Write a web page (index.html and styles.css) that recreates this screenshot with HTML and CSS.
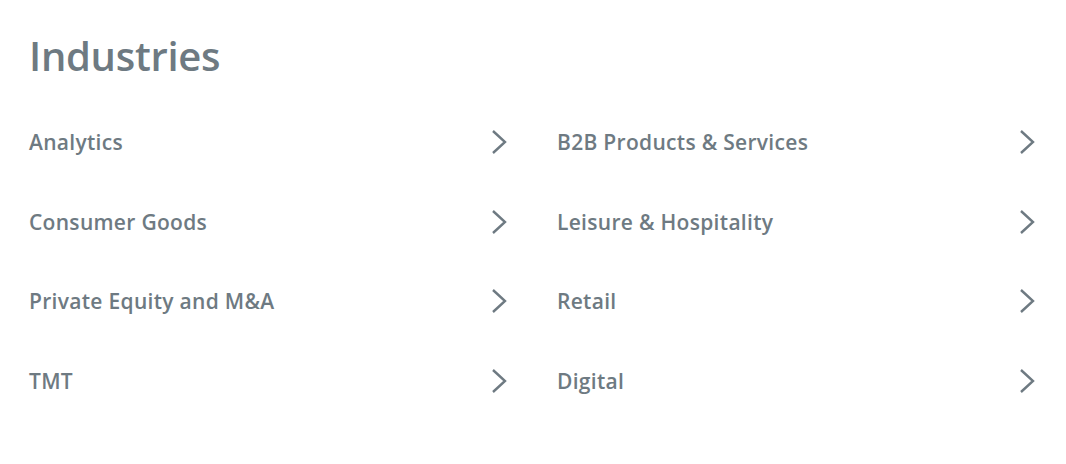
FILE: index.html
```html
<!DOCTYPE html>
<html lang="en">
<head>
  <meta charset="UTF-8">
  <meta name="viewport" content="width=device-width, initial-scale=1.0">
  <title>Industries</title>
  <link rel="stylesheet" href="styles.css">
</head>
<body>
  <section class="industries">
    <h1>Industries</h1>
    <ul class="list">
      <li><a href="#"><span>Analytics</span><svg class="chev" viewBox="0 0 16 26"><polyline points="2,2 14,13 2,24"/></svg></a></li>
      <li><a href="#"><span>B2B Products &amp; Services</span><svg class="chev" viewBox="0 0 16 26"><polyline points="2,2 14,13 2,24"/></svg></a></li>
      <li><a href="#"><span>Consumer Goods</span><svg class="chev" viewBox="0 0 16 26"><polyline points="2,2 14,13 2,24"/></svg></a></li>
      <li><a href="#"><span>Leisure &amp; Hospitality</span><svg class="chev" viewBox="0 0 16 26"><polyline points="2,2 14,13 2,24"/></svg></a></li>
      <li><a href="#"><span>Private Equity and M&amp;A</span><svg class="chev" viewBox="0 0 16 26"><polyline points="2,2 14,13 2,24"/></svg></a></li>
      <li><a href="#"><span>Retail</span><svg class="chev" viewBox="0 0 16 26"><polyline points="2,2 14,13 2,24"/></svg></a></li>
      <li><a href="#"><span>TMT</span><svg class="chev" viewBox="0 0 16 26"><polyline points="2,2 14,13 2,24"/></svg></a></li>
      <li><a href="#"><span>Digital</span><svg class="chev" viewBox="0 0 16 26"><polyline points="2,2 14,13 2,24"/></svg></a></li>
    </ul>
  </section>
</body>
</html>
```

FILE: styles.css
```css
body {
  font-family: 'Open Sans', Lato, sans-serif;
  margin: 0;
  padding: 0;
  background: #fff;
  color: #6e7a82;
}
.industries {
  padding: 28px 30px 0 29px;
}
h1 {
  margin: 0 0 38px;
  font-size: 40px;
  font-weight: 600;
  line-height: 56px;
  letter-spacing: -0.3px;
}
.list {
  list-style: none;
  margin: 0;
  padding: 0;
  display: grid;
  grid-template-columns: 478px 478px;
  column-gap: 50px;
}
.list li {
  height: 79.5px;
}
.list a {
  display: flex;
  align-items: center;
  justify-content: space-between;
  height: 40px;
  color: inherit;
  text-decoration: none;
  font-size: 21px;
  font-weight: 600;
  letter-spacing: 0.3px;
}
.chev {
  width: 16px;
  height: 26px;
  fill: none;
  stroke: #6e7a82;
  stroke-width: 2.4;
}
```
